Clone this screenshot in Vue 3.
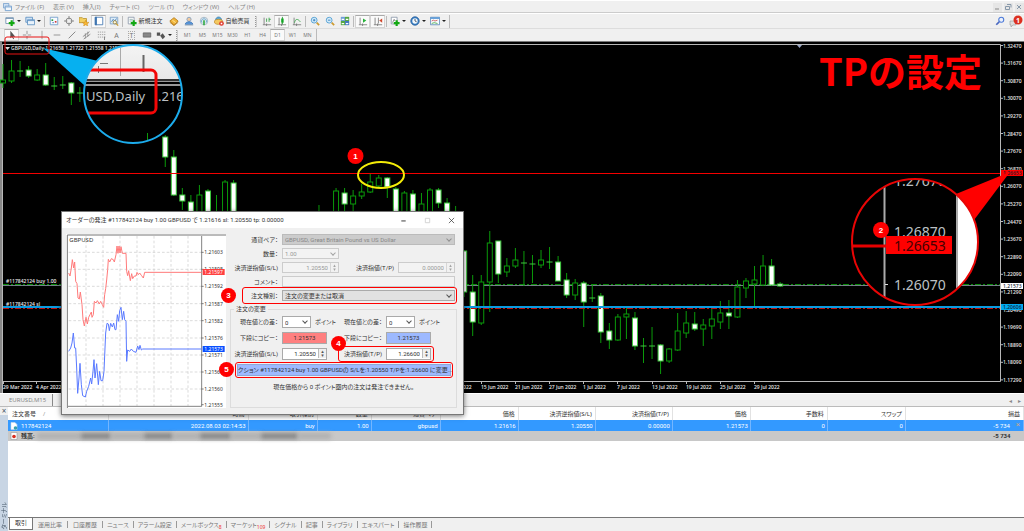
<script setup>
import { ref } from 'vue'

const menus = ['ファイル (F)', '表示 (V)', '挿入(I)', 'チャート (C)', 'ツール (T)', 'ウィンドウ (W)', 'ヘルプ (H)']

const doc = '<path d="M1.5 1.5h7v8h-7z" fill="#fff" stroke="#8a98a8"/>'
const plus = '<path d="M8 5v7M4.500 8.500h7" stroke="#12a812" stroke-width="2.600"/>'
const axes = '<path d="M2.500 2v8.500M1 10.500h10M5.500 9v3" stroke="#777" fill="none"/>'
const lens = '<circle cx="5" cy="5" r="3.500" fill="#d5ecfa" stroke="#4a9ad0"/><path d="M8 8l3 3" stroke="#cc9a30" stroke-width="2"/>'

const tools = [
  { k: 'drop', n: 'チャートを追加', s: '<path d="M1 2h9v7H1z" fill="#fff" stroke="#6f8fae"/><path d="M1 3h9" stroke="#6f8fae"/>' + plus },
  { k: 'drop', n: 'プロファイル', s: '<path d="M1 1.500h8v6H1z" fill="#cfe3f5" stroke="#5b8fc0"/><path d="M3 4.500h8.500v6H3z" fill="#e8f2fb" stroke="#5b8fc0"/><path d="M3 5.500h8" stroke="#5b8fc0"/>' },
  { k: 'sep' },
  { k: 'tool', n: '気配値表示', s: '<path d="M1.500 1.500h9v9h-9z" fill="#f7fbff" stroke="#6b9ac8"/><path d="M3 4h2v2H3z" fill="#2a9d3a"/><path d="M7 6h2v2H7z" fill="#cf3a3a"/><path d="M4 8h2" stroke="#3a76c0"/>' },
  { k: 'tool', n: 'データウィンドウ', s: '<circle cx="6" cy="6" r="3.500" fill="none" stroke="#777"/><path d="M6 0v4M6 8v4M0 6h4M8 6h4" stroke="#777"/>' },
  { k: 'tool', n: 'ナビゲーター', s: '<path d="M0 2h4l1 1h4v5H0z" fill="#f4cf60" stroke="#b99434"/><path d="M8 5l1 2.500 3 .2-2.200 1.800.7 2.500L8 10.500 5.500 12l.7-2.500L4 7.700l3-.2z" fill="#f7b733" stroke="#cc8a1c" stroke-width=".6"/>' },
  { k: 'tool', on: true, n: 'ターミナル', s: '<path d="M1.500 1.500h9v9h-9z" fill="#fff" stroke="#3e74b0"/><path d="M1 1h2.500v10H1z" fill="#3e74b0"/>' },
  { k: 'tool', n: 'ストラテジーテスター', s: '<path d="M1.500 1.500h9v8h-9z" fill="#dcecf8" stroke="#7aa0c6"/><path d="M3 7l2-3 2 2 2-3" fill="none" stroke="#3f78b4"/><circle cx="7" cy="7.500" r="2" fill="#fff8d8" stroke="#8b7a40"/><path d="M8.500 9l2.500 2.500" stroke="#c89a30" stroke-width="1.500"/>' },
  { k: 'sep' },
  { k: 'wide', n: '新規注文', t: '新規注文', s: doc + '<path d="M3 4h4M3 6h3" stroke="#8aa"/>' + plus },
  { k: 'tool', n: 'メタエディター', s: '<path d="M1 6l5-4 5 4-5 5z" fill="#f1b53a" stroke="#b47a16"/><path d="M1 7.500l5 4 5-4" fill="none" stroke="#b47a16"/><path d="M4 5l4 3" stroke="#fff0b0"/>' },
  { k: 'tool', n: 'アカウント', s: '<circle cx="6" cy="4" r="2.500" fill="#f0c9a0" stroke="#7d9cc0"/><path d="M1.500 10c0-4 9-4 9 0z" fill="#5d9be0" stroke="#3d72b0"/><path d="M1 11h10" stroke="#9ab"/>' },
  { k: 'tool', n: 'シグナル', s: '<circle cx="6" cy="6" r="4.500" fill="#e9eef2" stroke="#9ab0c0"/><path d="M3.500 8a3 3 0 1 1 5 0" fill="none" stroke="#57a0cc"/><path d="M6 5v6" stroke="#35ac45" stroke-width="2"/>' },
  { k: 'wide', n: '自動売買', t: '自動売買', s: '<path d="M2 5c0-5 7-5 7 0z" fill="#5ba8d8" stroke="#3a80b0"/><ellipse cx="5.500" cy="7" rx="5" ry="3" fill="#f5c860" stroke="#c09030"/><circle cx="9" cy="9" r="2.800" fill="#df3328"/><path d="M8 8h2v2H8z" fill="#fff"/>' },
  { k: 'grip' },
  { k: 'tool', n: 'バーチャート', s: axes + '<path d="M5.500 3v4M8.500 2v5M8.500 4h2" stroke="#2f9f3d"/>' },
  { k: 'tool', on: true, n: 'ローソク足', s: axes + '<path d="M5 3h3v5H5z" fill="#19b52b"/><path d="M6.500 1v9" stroke="#19952b"/>' },
  { k: 'tool', n: 'ラインチャート', s: axes + '<path d="M3 8c1-5 4-5 7-1" fill="none" stroke="#35a545"/>' },
  { k: 'sep' },
  { k: 'tool', n: '拡大', s: lens + '<path d="M3.500 5h3M5 3.500v3" stroke="#2b78b8"/>' },
  { k: 'tool', n: '縮小', s: lens + '<path d="M3.500 5h3" stroke="#2b78b8"/>' },
  { k: 'tool', n: '整列', s: '<path d="M1 1h5v5H1z" fill="#6f9fd8"/><path d="M6 1h5v5H6z" fill="#56a844"/><path d="M1 6h5v5H1z" fill="#56a844"/><path d="M6 6h5v5H6z" fill="#4478c0"/><path d="M2 4h3M7 4h3M2 9h3M7 9h3" stroke="#fff" stroke-width="1.500"/>' },
  { k: 'sep' },
  { k: 'tool', on: true, n: '自動スクロール', s: axes + '<path d="M6 3l4 2.500L6 8z" fill="#28b23a"/>' },
  { k: 'tool', on: true, n: 'チャートシフト', s: axes + '<path d="M6.500 2v7" stroke="#777"/><path d="M11 3L7.500 5.500 11 8z" fill="#d1492e"/>' },
  { k: 'sep' },
  { k: 'drop', n: 'インディケータ', s: doc + '<path d="M3 8l2-4 1 2" stroke="#777" fill="none"/>' + plus },
  { k: 'drop', n: '時間足', s: '<circle cx="6" cy="6" r="5" fill="#3b82c8" stroke="#225a98"/><circle cx="6" cy="6" r="3.200" fill="#f2f7fb"/><path d="M6 3.500V6l2 1" fill="none" stroke="#345"/>' },
  { k: 'drop', n: '定型チャート', s: '<path d="M.5 1.500h11v9H.5z" fill="#f5fafe" stroke="#5c88b8"/><path d="M.5 2.500h11" stroke="#5c9bd8" stroke-width="2"/><path d="M2 6l2-1 2 1 3-1" fill="none" stroke="#c55"/><path d="M2 9l3-1 4 1" fill="none" stroke="#4a4"/>' },
]

const drawTools = [
  { n: 'カーソル', on: true, s: '<path d="M4 1v9l2-2 1.500 3 1-.5L7 8h3z" fill="#555"/>' },
  { n: '十字カーソル', s: '<path d="M6 1v4M6 7v4M1 6h4M7 6h4" stroke="#888"/>' },
  { n: '垂直線', s: '<path d="M6 1v10" stroke="#999"/>' },
  { n: '水平線', s: '<path d="M2 6h8" stroke="#888"/>' },
  { n: 'トレンドライン', s: '<path d="M2 10l8-8" stroke="#777"/>' },
  { n: 'チャネル', s: '<path d="M1 8l8-6M2 11l8-6M4 4v6M7 2v6" stroke="#888" fill="none"/>' },
  { n: 'フィボナッチ', s: '<path d="M1 2.500h9M1 5.500h9M1 8.500h9" stroke="#999" stroke-dasharray="1.500 1"/><path d="M9 8v4" stroke="#777"/>' },
  { n: 'テキスト', t: 'A' },
  { n: 'ラベル', t: 'T', box: true },
  { n: '図形', s: '<path d="M1.500 3.500h9v5h-9z" fill="#888" stroke="#666"/>' },
]

const frames = ['M1', 'M5', 'M15', 'M30', 'H1', 'H4', 'D1', 'W1', 'MN']

// index, high, body top, body bottom, low, kind (f: bearish, h: bullish, d: flat)
const raw = [
  [0, 64, 80, 83, 88, 'h'], [1, 60, 71, 81, 83, 'h'], [2, 61, 71, 71, 77, 'd'], [3, 66, 70, 76, 78, 'f'], [4, 69, 75, 80, 81, 'h'],
  [5, 63, 75, 85, 86, 'f'], [6, 77, 86, 86, 90, 'd'], [7, 76, 85, 85, 89, 'd'], [8, 82, 83, 93, 105, 'f'], [9, 87, 93, 93, 102, 'd'],
  [19, 135, 137, 157, 167, 'f'], [20, 150, 157, 195, 196, 'f'], [21, 188, 195, 201, 210, 'f'], [22, 195, 202, 216, 220, 'f'],
  [23, 185, 195, 216, 220, 'h'], [24, 189, 191, 216, 220, 'f'], [25, 195, 215, 215, 220, 'd'], [26, 180, 182, 216, 220, 'h'],
  [27, 180, 183, 216, 220, 'f'], [37, 205, 216, 216, 220, 'd'], [39, 188, 191, 216, 220, 'h'], [40, 188, 193, 204, 212, 'f'],
  [41, 190, 196, 204, 212, 'h'], [42, 184, 192, 196, 199, 'h'], [43, 174, 182, 192, 193, 'h'], [44, 175, 178, 186, 187, 'h'],
  [45, 177, 178, 187, 198, 'f'], [46, 187, 189, 216, 220, 'f'], [47, 191, 193, 216, 220, 'h'], [48, 190, 194, 216, 220, 'f'],
  [49, 193, 204, 216, 220, 'h'], [50, 188, 190, 216, 220, 'h'], [51, 188, 190, 203, 208, 'f'], [52, 198, 203, 216, 220, 'f'],
  [53, 206, 216, 216, 220, 'd'], [54, 250, 251, 292, 297, 'f'], [55, 275, 292, 322, 336, 'f'], [56, 275, 282, 323, 325, 'h'],
  [57, 231, 243, 282, 312, 'h'], [58, 241, 241, 274, 283, 'f'], [59, 258, 266, 272, 277, 'h'], [60, 248, 260, 266, 268, 'h'],
  [61, 251, 263, 263, 286, 'd'], [62, 255, 264, 264, 283, 'd'], [63, 250, 260, 265, 268, 'h'], [64, 247, 262, 262, 269, 'd'],
  [65, 256, 262, 281, 281, 'f'], [66, 273, 280, 295, 298, 'f'], [67, 279, 283, 295, 300, 'h'], [68, 281, 283, 302, 327, 'f'],
  [69, 284, 298, 298, 302, 'd'], [70, 293, 296, 332, 343, 'f'], [71, 323, 331, 340, 349, 'f'], [72, 314, 317, 340, 341, 'h'],
  [73, 308, 314, 317, 339, 'h'], [74, 312, 318, 346, 350, 'f'], [75, 338, 346, 346, 363, 'd'], [76, 327, 346, 346, 359, 'd'],
  [77, 344, 345, 361, 374, 'f'], [78, 348, 349, 361, 363, 'h'], [79, 313, 331, 350, 351, 'h'], [80, 311, 323, 333, 338, 'h'],
  [81, 312, 324, 329, 331, 'f'], [82, 319, 325, 329, 346, 'h'], [83, 308, 319, 326, 339, 'h'], [84, 301, 313, 322, 329, 'h'],
  [85, 300, 313, 316, 329, 'f'], [86, 280, 287, 317, 318, 'h'], [87, 278, 281, 288, 298, 'h'], [88, 266, 280, 284, 307, 'h'],
  [89, 255, 266, 285, 286, 'h'], [90, 259, 266, 285, 286, 'f'], [91, 282, 284, 286, 287, 'f'],
]
const candles = raw.map(([i, high, top, bottom, low, kind]) => ({ x: 3 + 8.54 * i, high, top, bottom, low, kind }))

const prices = ['1.32470', '1.31670', '1.30870', '1.30070', '1.29270', '1.28470', '1.27670', '1.26870', '1.26070', '1.25270',
  '1.24470', '1.23670', '1.22890', '1.22090', '1.21290', '1.20490', '1.19690', '1.18890', '1.18090', '1.17290']
const dates = [[3, '29 Mar 2022'], [36, '4 Apr 2022'], [447, '9 Jun 2022'], [481, '15 Jun 2022'], [515, '21 Jun 2022'], [549, '27 Jun 2022'],
  [583, '1 Jul 2022'], [617, '7 Jul 2022'], [652, '13 Jul 2022'], [686, '19 Jul 2022'], [720, '25 Jul 2022'], [754, '29 Jul 2022']]

const ticks = [[143, '1.21603'], [194, '1.21598'], [245, '1.21592'], [297, '1.21587'], [348, '1.21582'], [400, '1.21576'],
  [451, '1.21571'], [502, '1.21566'], [553, '1.21560'], [600, '1.21555']]
const gridX = [78, 129, 180, 231, 282, 333, 384]
const ask = '26,205 30,214 34,190 37,165 41,190 44,172 47,230 51,237 54,280 58,283 61,262 66,300 69,345 73,364 78,338 82,358 86,338 90,330 94,322 96,338 100,330 103,290 108,295 112,288 118,298 122,290 127,300 131,308 134,270 137,252 140,226 143,195 145,164 149,172 154,162 160,165 163,172 168,150 171,124 174,146 177,124 180,145 183,126 187,146 198,146 200,200 203,213 206,198 211,228 215,207 218,222 223,214 228,214 231,203 235,210 239,205 244,212 250,220 254,203 425,203'
const bid = '26,440 32,430 36,415 40,385 44,430 47,430 50,490 53,566 57,520 60,476 64,540 68,573 76,577 80,560 86,545 92,520 95,538 99,500 102,465 105,520 110,477 115,540 119,500 123,528 128,528 132,500 135,430 137,385 141,356 145,358 148,378 152,356 157,367 161,355 165,375 168,375 172,330 176,350 179,318 183,308 187,345 191,320 194,345 198,350 200,470 203,436 209,440 214,433 220,440 228,443 233,424 237,435 240,422 244,436 248,433 425,433'

const columns = [
  ['注文番号', 100], ['時間', 140], ['取引種別', 69], ['数量', 54], ['通貨ペア', 69], ['価格', 78], ['決済逆指値(S/L)', 77],
  ['決済指値(T/P)', 77], ['価格', 78], ['手数料', 77], ['スワップ', 78], ['損益', 118],
]
const order = ['117842124', '2022.08.03 02:14:53', 'buy', '1.00', 'gbpusd', '1.21616', '1.20550', '0.00000', '1.21573', '0', '0', '-5 734']
const masked = [44, 30, 33, 29, 27, 31, 30, 37, 33]

const tabs = [['取引'], ['運用比率'], ['口座履歴'], ['ニュース'], ['アラーム設定'], ['メールボックス', '8'], ['マーケット', '109'],
  ['シグナル'], ['記事'], ['ライブラリ'], ['エキスパート'], ['操作履歴']]

const lots = ref('1.00')
const sl0 = ref('1.20550')
const tp0 = ref('0.00000')
const comment = ref('')
const sl = ref('1.20550')
const tp = ref('1.26600')
</script>

<template>
  <div class="app">
    <nav class="menubar">
      <svg class="logo" viewBox="0 0 10 10"><path d="M.5 .5h6v5h-6z" fill="#cfe0f2" stroke="#7fa6cf" /><path d="M2.500 3.500h7v5h-7z" fill="#f2f7fc" stroke="#6f9ccc" /><path d="M3 4.500h6" stroke="#8fb3da" /></svg>
      <button v-for="m in menus" :key="m" class="menu">{{ m }}</button>
      <div class="wincontrols">
        <button aria-label="最小化"><svg viewBox="0 0 8 8"><path d="M2 6h4" stroke="#888" /></svg></button>
        <button aria-label="元に戻す"><svg viewBox="0 0 8 8"><path d="M3 1.500h4v3M1.500 3.500h4v3h-4z" fill="none" stroke="#8899aa" /></svg></button>
        <button aria-label="閉じる"><svg viewBox="0 0 8 8"><path d="M2 2l4 4M6 2L2 6" stroke="#8899aa" /></svg></button>
      </div>
    </nav>

    <div class="toolbar">
      <template v-for="(t, i) in tools" :key="i">
        <span v-if="t.k === 'sep'" class="sep"></span>
        <span v-else-if="t.k === 'grip'" class="grip"></span>
        <button v-else class="btn" :class="[t.k, { on: t.on }]" :aria-label="t.n">
          <svg class="ico" viewBox="0 0 12 12" v-html="t.s"></svg>
          <span v-if="t.t">{{ t.t }}</span>
          <svg v-if="t.k === 'drop'" class="caret" viewBox="0 0 4 4"><path d="M0 1h4L2 3z" fill="#222" /></svg>
        </button>
      </template>
      <span class="barend"></span>
      <div class="right">
        <button class="btn tool" aria-label="検索"><svg class="ico" viewBox="0 0 12 12"><circle cx="7.500" cy="4.500" r="3" fill="#eaf0fb" stroke="#4a78d8" stroke-width="1.300" /><path d="M5 7L1.500 10.500" stroke="#4a68c0" stroke-width="2" /></svg></button>
        <button class="btn bell" aria-label="通知"><svg viewBox="0 0 16 14"><path d="M2 7h6v4H5l-2 2v-2H2z" fill="#ddd" stroke="#999" stroke-width=".6" /><circle cx="10" cy="6" r="4.500" fill="#dc3020" /><text x="10" y="8.500" text-anchor="middle" font-size="7" font-weight="700" fill="#fff">1</text></svg></button>
      </div>
    </div>

    <div class="toolbar second">
      <button v-for="d in drawTools" :key="d.n" class="btn tool" :class="{ on: d.on }" :aria-label="d.n">
        <span v-if="d.t" class="glyph" :class="{ boxed: d.box }">{{ d.t }}</span>
        <svg v-else class="ico" viewBox="0 0 12 12" v-html="d.s"></svg>
      </button>
      <button class="btn drop" aria-label="矢印"><svg class="ico" viewBox="0 0 12 12"><path d="M1 3h4v4H1zM5 7l3-3 3 4-3 3z" fill="#555" /></svg><svg class="caret" viewBox="0 0 4 4"><path d="M0 1h4L2 3z" fill="#222" /></svg></button>
      <span class="grip"></span>
      <button v-for="f in frames" :key="f" class="btn frame" :class="{ on: f === 'D1' }">{{ f }}</button>
      <span class="barend"></span>
    </div>

    <svg class="chart" viewBox="0 41 1024 352">
      <defs>
        <clipPath id="lens1"><circle cx="133" cy="94" r="49" /></clipPath>
        <clipPath id="lens2"><circle cx="915" cy="242" r="63" /></clipPath>
        <linearGradient id="paper" x1="0" y1="0" x2="0" y2="1"><stop offset="0" stop-color="#f4f4f4" /><stop offset="1" stop-color="#e8e8e8" /></linearGradient>
      </defs>
      <rect y="41" width="1024" height="352" fill="#000" />
      <path d="M0 41.500h1024" stroke="#777" /><path d="M1 41v352" stroke="#888" stroke-width="2" />
      <path d="M2.500 393V44.500H1000.500V381.500H2.500" fill="none" stroke="#b8b8b8" />
      <path d="M797 45h5l-2.500 3z" fill="#9aa8c8" />

      <path d="M3 285.500H1000" stroke="#76808a" />
      <path d="M3 284.500H1000" stroke="#0a8a0a" stroke-dasharray="6 2 2 2" />
      <g v-for="c in candles" :key="c.x" :class="c.kind">
        <path :d="`M${c.x} ${c.high}V${c.low}`" class="wick" />
        <path v-if="c.kind === 'd'" :d="`M${c.x - 3} ${c.top}h6`" class="flat" />
        <rect v-else :x="c.x - 2.5" :y="c.top" width="5" :height="c.bottom - c.top" class="body" />
      </g>
      <rect x="3" y="173" width="997" height="1" fill="#f40000" />
      <rect x="3" y="306" width="997" height="2" fill="#0a9be0" />
      <path d="M3 308.500H1000" stroke="#c01010" stroke-dasharray="6 2 2 2" />

      <g class="tiny">
        <path d="M5 47h5l-2.500 3z" fill="#ddd" />
        <text x="11" y="50">GBPUSD,Daily 1.21658 1.21722 1.21558 1.21573</text>
        <text x="6" y="283">#117842124 buy 1.00</text>
        <text x="6" y="306">#117842124 sl</text>
        <g v-for="(p, i) in prices" :key="p">
          <path :d="`M1000 ${45.5 + 17.6 * i}h3`" stroke="#bbb" />
          <text x="1003" :y="47.5 + 17.6 * i">{{ p }}</text>
        </g>
        <g v-for="[x, d] in dates" :key="d">
          <path :d="`M${x + .5} 381v3`" stroke="#bbb" />
          <text :x="x" y="389">{{ d }}</text>
        </g>
        <rect x="1001" y="170" width="22" height="6" fill="#f00" /><text x="1003" y="175" class="dark">1.26653</text>
        <rect x="1001" y="283" width="22" height="6" fill="#fff" /><text x="1003" y="288" class="dark">1.21573</text>
        <rect x="1001" y="304" width="22" height="6" fill="#00aaf0" /><text x="1003" y="309" class="dark">1.20606</text>
      </g>

      <path d="M43 48L98 61L84 85z" fill="#06b0f0" />
      <g clip-path="url(#lens1)">
        <rect x="83" y="44" width="101" height="101" fill="#000" />
        <rect x="83" y="44" width="101" height="35" fill="url(#paper)" />
        <path d="M83 80h101" stroke="#333" stroke-width="2" /><path d="M83 81.500h101" stroke="#999" /><path d="M83 85h101" stroke="#999" stroke-width="2" />
        <path d="M100 63.500h8M98.500 66v7" stroke="#777" /><path d="M120.500 48v28" stroke="#aaa" /><path d="M143.500 55v17" stroke="#666" stroke-width="2" />
        <g class="magnified small"><text x="86" y="101">USD,Daily</text><text x="158" y="101">.216</text></g>
        <rect x="70" y="70" width="86" height="43" rx="5" fill="none" stroke="#f30606" stroke-width="3" />
        <path d="M147.500 133v7M157 136v6" stroke="#0a9a0a" />
      </g>
      <circle cx="133" cy="94" r="49" fill="none" stroke="#1cacec" stroke-width="2" />
      <rect x="5" y="37" width="44" height="17" rx="2" fill="none" stroke="#e81212" />

      <ellipse cx="381" cy="175" rx="23" ry="13" fill="none" stroke="#f4ec08" stroke-width="2" />

      <path d="M1010 172L956 194L974 220z" fill="#f00" />
      <g clip-path="url(#lens2)">
        <rect x="851" y="178" width="128" height="128" fill="#000" />
        <path d="M884.500 178v128M957 178v128" stroke="#aaa" stroke-width="2" /><rect x="958" y="178" width="22" height="128" fill="#fff" />
        <path d="M885 284.500h3" stroke="#ddd" />
        <g class="magnified"><text x="894" y="186">1.27670</text><text x="894" y="237">1.26870</text><text x="894" y="290">1.26070</text></g>
        <path d="M851 246h36" stroke="#e50000" stroke-width="3" />
        <rect x="886" y="236" width="66" height="18" fill="#f00" />
        <g class="magnified deep"><text x="894" y="251">1.26653</text></g>
      </g>
      <circle cx="915" cy="242" r="63" fill="none" stroke="#e80505" stroke-width="2" />

      <g class="mark"><circle cx="355.500" cy="156" r="8" /><text x="355.500" y="159">1</text><circle cx="881" cy="230" r="8" /><text x="881" y="233">2</text></g>
      <text x="819" y="86" class="headline">TPの設定</text>
    </svg>

    <section class="dialog">
      <header>
        <span>オーダーの発注 #117842124 buy 1.00 GBPUSD で 1.21616 sl: 1.20550 tp: 0.00000</span>
        <div class="ctl">
          <button aria-label="最小化"><svg viewBox="0 0 8 8"><path d="M1.500 4.500h5" stroke="#222" /></svg></button>
          <button aria-label="最大化" disabled><svg viewBox="0 0 8 8"><path d="M1.500 1.500h5v5h-5z" fill="none" stroke="#d0d0d0" /></svg></button>
          <button aria-label="閉じる"><svg viewBox="0 0 8 8"><path d="M1 1l6 6M7 1L1 7" stroke="#333" stroke-width=".8" /></svg></button>
        </div>
      </header>
      <div class="content">
        <svg class="tickchart" viewBox="18 88 480 522">
          <rect x="18" y="88" width="480" height="522" fill="#fff" />
          <path d="M22 610V91H498" fill="none" stroke="#777" stroke-width="3" />
          <g stroke="#c8c8c8" stroke-width="2" stroke-dasharray="8 6">
            <path v-for="x in gridX" :key="x" :d="`M${x} 94V604`" />
            <path v-for="[y, p] in ticks.slice(0, 9)" :key="p" :d="`M26 ${y}H425`" />
          </g>
          <path d="M425 94V605H24" fill="none" stroke="#444" stroke-width="2" />
          <g class="tick"><template v-for="[y, p] in ticks" :key="p"><path :d="`M425 ${y}h6`" stroke="#444" stroke-width="2" /><text x="433" :y="y + 6">{{ p }}</text></template></g>
          <polyline :points="ask" fill="none" stroke="#ff7a7a" stroke-width="3" />
          <polyline :points="bid" fill="none" stroke="#5a7aff" stroke-width="3" />
          <rect x="428" y="193" width="66" height="18" fill="#ff4040" /><rect x="428" y="424" width="66" height="18" fill="#0a50ff" />
          <g class="tick inv"><text x="433" y="208">1.21597</text><text x="433" y="439">1.21573</text></g>
          <text x="28" y="113" font-size="18" fill="#333">GBPUSD</text>
        </svg>

        <form @submit.prevent>
          <div class="row">
            <label for="sym">通貨ペア：</label>
            <span class="sel gray"><select id="sym" disabled><option>GBPUSD, Great Britain Pound vs US Dollar</option></select></span>
          </div>
          <div class="row">
            <label for="lot">数量：</label>
            <span class="sel w56 off"><select id="lot" v-model="lots" disabled><option>1.00</option></select></span>
          </div>
          <div class="row">
            <label for="sl0">決済逆指値(S/L)</label>
            <span class="spin w56 off"><input id="sl0" v-model="sl0" disabled></span>
            <label for="tp0" class="mid">決済指値(T/P)</label>
            <span class="spin off"><input id="tp0" v-model="tp0" disabled></span>
          </div>
          <div class="row">
            <label for="cm">コメント：</label>
            <span class="spin plain off"><input id="cm" v-model="comment" disabled></span>
          </div>
          <div class="row ring ring3">
            <label for="ty">注文種別：</label>
            <span class="sel type"><select id="ty"><option>注文の変更または取消</option></select></span>
            <i class="dot">3</i>
          </div>

          <fieldset>
            <legend>注文の変更</legend>
            <div class="pair points">
              <label for="d1">現在値との差：</label><span class="sel"><select id="d1"><option>0</option></select></span><span class="unit">ポイント</span>
              <label for="d2">現在値との差：</label><span class="sel"><select id="d2"><option>0</option></select></span><span class="unit">ポイント</span>
            </div>
            <div class="pair">
              <label for="c1">下段にコピー：</label><button id="c1" class="copy red">1.21573</button>
              <label for="c2">下段にコピー：</label><button id="c2" class="copy blue">1.21573</button>
            </div>
            <div class="pair">
              <label for="sl">決済逆指値(S/L)</label><span class="spin wideval"><input id="sl" v-model="sl"></span>
              <label for="tp">決済指値(T/P)</label><span class="spin wideval"><input id="tp" v-model="tp"></span>
              <div class="ring4"><i class="dot">4</i></div>
            </div>
            <div class="submit ring">
              <button class="modify">クション #117842124 buy 1.00 GBPUSDの S/Lを:1.20550 T/Pを:1.26600 に変更...</button>
              <i class="dot">5</i>
            </div>
            <p>現在価格から 0 ポイント圏内の注文は発注できません。</p>
          </fieldset>
        </form>
      </div>
    </section>

    <div class="charttabs">
      <button class="ct">EURUSD,M15</button><button class="ct act">GBPUSD,Daily</button>
      <span class="arrows"><button aria-label="前へ">◂</button><button aria-label="次へ">▸</button></span>
    </div>

    <section class="terminal">
      <aside><button aria-label="閉じる">×</button><span>ターミナル</span></aside>
      <div class="panel">
        <div class="list">
          <table>
            <colgroup><col v-for="(c, i) in columns" :key="i" :style="{ width: c[1] + 'px' }"></colgroup>
            <thead><tr><th v-for="(c, i) in columns" :key="i">{{ c[0] }}<span v-if="i === 0" class="sort">/</span></th></tr></thead>
            <tbody>
              <tr class="sel-row">
                <td v-for="(v, i) in order" :key="i">
                  <svg v-if="i === 0" class="rowico" viewBox="0 0 8 8"><path d="M1 .5h4l2 2v5H1z" fill="#fff" stroke="#c8d8e8" stroke-width=".6" /><circle cx="5.500" cy="6" r="1.800" fill="#35a0b0" /></svg>{{ v }}<button v-if="i === 11" class="x" aria-label="決済">×</button>
                </td>
              </tr>
              <tr class="sum">
                <td colspan="11"><div class="bal"><svg class="rowico" viewBox="0 0 8 8"><path d="M1 .5h6v7H1z" fill="#fff" stroke="#999" stroke-width=".6" /><circle cx="4" cy="4.500" r="1.800" fill="#d83020" /></svg><span>残高:</span><i v-for="(w, i) in masked" :key="i" :class="{ lite: i % 2 === 0 }" :style="{ width: w + 'px' }"></i></div></td>
                <td>-5 734</td>
              </tr>
            </tbody>
          </table>
        </div>
        <div class="tabs"><button v-for="([t, n], i) in tabs" :key="t" :class="{ act: i === 0 }">{{ t }}<sub v-if="n">{{ n }}</sub></button></div>
      </div>
    </section>
  </div>
</template>

<style>
body { margin: 0; background: #f0f0f0; }
</style>

<style scoped>
.app { position: relative; display: flex; flex-direction: column; min-height: 100vh; overflow: hidden; background: #f0f0f0; color: #333; font: 6px/1 "Noto Sans", "Noto Sans CJK JP", sans-serif; font-feature-settings: "palt"; }
.app * { box-sizing: border-box; }
button, input, select { margin: 0; padding: 0; border: 0; background: none; color: inherit; font: inherit; font-feature-settings: inherit; }
button { white-space: nowrap; }
svg { display: block; flex: none; }

.menubar { display: flex; align-items: center; height: 13px; padding: 1px 0 0 3px; border-top: 1px solid #fff; border-bottom: 1px solid #ccc; color: #888; gap: 9px; }
.logo { width: 9px; height: 9px; margin-right: -6px; }
.wincontrols { display: flex; gap: 2px; margin-left: auto; }
.wincontrols button { width: 9px; height: 9px; background: #e6e6e6; }
.wincontrols svg { width: 8px; height: 8px; }

.toolbar { display: flex; align-items: center; height: 15px; padding-left: 3px; border-top: 1px solid #fff; }
.toolbar.second { height: 13px; padding-left: 4px; border-color: #ddd; color: #777; }
.btn { display: flex; align-items: center; justify-content: center; height: 13px; flex: none; color: #333; }
.second .btn { height: 12px; color: #777; font-size: 5px; }
.tool, .frame { width: 15px; }
.drop { width: 20px; gap: 2px; }
.wide { width: 42px; gap: 1px; }
.on { background: #fafafa; border: 1px solid #d4d4d4; border-top-color: #aaa; }
.ico { width: 10px; height: 10px; }
.caret { width: 4px; height: 4px; }
.sep { width: 1px; height: 11px; margin: 0 1px; background: #bbb; }
.grip { width: 2px; height: 11px; margin: 0 2px; border-left: 1px dotted #999; border-right: 1px solid #ccc; }
.barend { width: 1px; height: 13px; background: #bbb; margin-left: 1px; }
.right { display: flex; margin-left: auto; }
.bell { width: 17px; }
.bell svg { width: 16px; height: 14px; }
.second .glyph { font-size: 7px; }
.boxed { border: 1px dotted #aaa; padding: 0 1px; }

.chart { width: 100%; height: auto; overflow: visible; }
.wick { stroke: #0a9a0a; stroke-width: 1; }
.body { stroke: #0a9a0a; stroke-width: 1; fill: #000; }
.f .body { fill: #fff; stroke: #3cc83c; }
.flat { stroke: #3ec83e; stroke-width: 1; }
.tiny text { fill: #f0f0f0; font-size: 5px; font-weight: 500; }
.tiny .dark { fill: #123; }
.magnified text { fill: #bcc0c4; font-size: 14px; }
.magnified.small text { font-size: 13px; }
.magnified.deep text { fill: #400; }
.mark circle { fill: #f00; }
.mark text { fill: #fff; font: 700 8px "Liberation Sans", sans-serif; text-anchor: middle; }
.headline { fill: #f00; font: 700 38px "Noto Sans CJK JP", sans-serif; font-feature-settings: normal; }

.dialog { position: absolute; left: 61px; top: 211px; width: 403px; background: #f0f0f0; border: 1px solid #777; box-shadow: 0 1px 5px rgba(0, 0, 0, .55); font-family: Roboto, "Noto Sans CJK JP", sans-serif; }
.dialog header { display: flex; align-items: center; height: 16px; padding-left: 4px; background: #fff; }
.ctl { display: flex; margin-left: auto; }
.ctl button { display: flex; justify-content: center; width: 24px; }
.ctl svg { width: 7px; height: 7px; }
.content { display: flex; padding: 6px 6px 6px 4px; gap: 4px; }
.tickchart { width: 160px; height: 174px; font-family: "Noto Sans", sans-serif; }
.tick text { font-size: 15px; fill: #333; }
.tick.inv text { fill: #fff; }
form { flex: 1; min-width: 0; }
.row { position: relative; display: flex; align-items: center; height: 11px; margin-bottom: 3px; padding-right: 2px; }
.row label, .pair label { flex: none; width: 48px; padding-right: 4px; text-align: right; white-space: nowrap; }
.row label { width: 52px; }
.row .mid { width: 59px; }
.sel, .spin { position: relative; display: flex; flex: 1; height: 11px; background: #fff; border: 1px solid #aaa; }
.sel select, .spin input { width: 100%; min-width: 0; height: 9px; padding: 0 0 0 2px; appearance: none; line-height: 9px; opacity: 1; }
.spin input { padding-right: 10px; text-align: right; }
.sel::after { content: ""; position: absolute; right: 3px; top: 2px; width: 3px; height: 3px; border: solid #555; border-width: 0 1px 1px 0; rotate: 45deg; }
.spin:not(.plain)::after { content: "▴\A▾"; white-space: pre; position: absolute; right: 0; top: 0; width: 7px; height: 9px; overflow: hidden; border-left: 1px solid #bbb; background: #f0f0f0; color: #555; font: 5px/4px "DejaVu Sans", sans-serif; text-align: center; }
.row .w56 { flex: 0 0 57px; }
.row .gray { background: #ccc; border-color: #bbb; color: #888; }
.row .off { background: #f3f3f3; border-color: #ccc; color: #999; }
.gray::after, .off::after { opacity: .5; }
.row .type { background: #e1e1e1; }
.ring::before, .ring4 { content: ""; position: absolute; border: 1px solid #f00; border-radius: 3px; pointer-events: none; }
.ring3::before { left: 12px; right: 0; top: -3px; bottom: -3px; }
.dot { position: absolute; left: -9px; top: -2px; width: 15px; height: 15px; border-radius: 50%; background: #f00; color: #fff; font: 700 8px/15px "Liberation Sans", sans-serif; text-align: center; }
fieldset { margin: 4px 0 0; padding: 3px 3px 0; height: 103px; border: 1px solid #dcdcdc; min-width: 0; }
legend { padding: 0 2px; line-height: 8px; }
.pair { position: relative; display: grid; grid-template-columns: 48px 56px 48px 1fr; align-items: center; height: 12px; margin-bottom: 4px; }
.pair.points { grid-template-columns: 48px 29px 27px 48px 29px 1fr; }
.pair .sel { height: 12px; }
.pair .sel select { height: 10px; }
.unit { padding-left: 4px; white-space: nowrap; }
.copy, .pair .wideval { width: 45px; height: 12px; }
.copy { border: 1px solid #aaa; color: #333; }
.red { background: #ff8080; }
.blue { background: #9db9ff; }
.ring4 { left: 104px; width: 96px; top: -2px; height: 16px; }
.ring4 .dot { left: -8px; top: -11px; }
.submit { position: relative; width: 214px; margin-left: 3px; }
.submit::before { inset: -2px; }
.modify { display: block; width: 100%; height: 12px; border: 1px solid #8fa6d8; background: #9db9ff; color: #333; text-align: center; }
.submit .dot { left: -18px; top: -2px; }
p { margin: 8px 0 0; text-align: center; }

.charttabs { display: flex; align-items: stretch; height: 13px; border-top: 1px solid #fff; color: #888; }
.ct { padding: 0 6px 0 9px; border-right: 1px solid #888; }
.arrows { display: flex; gap: 6px; margin-left: auto; padding-right: 3px; font: 6px "DejaVu Sans", sans-serif; }

.terminal { display: flex; flex: 1; border-top: 1px solid #bbb; }
aside { display: flex; flex-direction: column; justify-content: space-between; align-items: center; width: 8px; padding-bottom: 2px; background: #c8d5e4; color: #456; }
aside button { width: 8px; height: 8px; background: #f0f0f0; font-size: 8px; line-height: 8px; }
aside span { writing-mode: vertical-rl; text-orientation: sideways; rotate: 180deg; white-space: nowrap; }
.panel { display: flex; flex-direction: column; flex: 1; min-width: 0; }
.list { flex: 1; background: #fff; border-bottom: 1px solid #777; }
table { width: 100%; table-layout: fixed; border-collapse: collapse; }
th, td { padding: 0 2px; border-right: 1px solid #e2e2e2; text-align: right; font-weight: 400; white-space: nowrap; }
th { height: 13px; padding-right: 3px; }
td { height: 11px; font-family: Roboto, "Noto Sans CJK JP", sans-serif; }
th:first-child { padding-left: 4px; text-align: left; }
td:first-child { padding-left: 2px; text-align: left; }
td:last-child { position: relative; padding-right: 13px; }
.sort { margin-left: 7px; color: #999; }
.sel-row { background: #39f; color: #fff; }
.sel-row td { border-color: #74b6ff; }
.sum { background: #c8c8c8; }
.sum td { height: 10px; border: 0; font-weight: 700; }
.rowico { display: inline-block; width: 8px; height: 8px; margin-right: 3px; vertical-align: middle; }
.x { position: absolute; right: 3px; top: 1px; color: #c0a890; font-size: 8px; line-height: 8px; }
.bal { display: flex; align-items: center; }
.bal span { margin-right: 2px; }
.bal i { height: 6px; background: #868686; filter: blur(2px); }
.bal i.lite { background: #b0b0b0; }
.tabs { display: flex; align-items: center; height: 13px; padding-left: 1px; color: #777; }
.tabs button { display: flex; align-items: center; height: 7px; padding: 0 4px; border-right: 1px solid #999; }
.tabs button:nth-child(-n+3) { padding: 0 5px; }
.tabs button.act { height: 12px; margin-top: -2px; background: #fff; color: #333; border: 1px solid #777; border-top: 0; }
sub { margin-top: 5px; color: #e33; font-size: 5px; line-height: 5px; vertical-align: baseline; }
</style>
